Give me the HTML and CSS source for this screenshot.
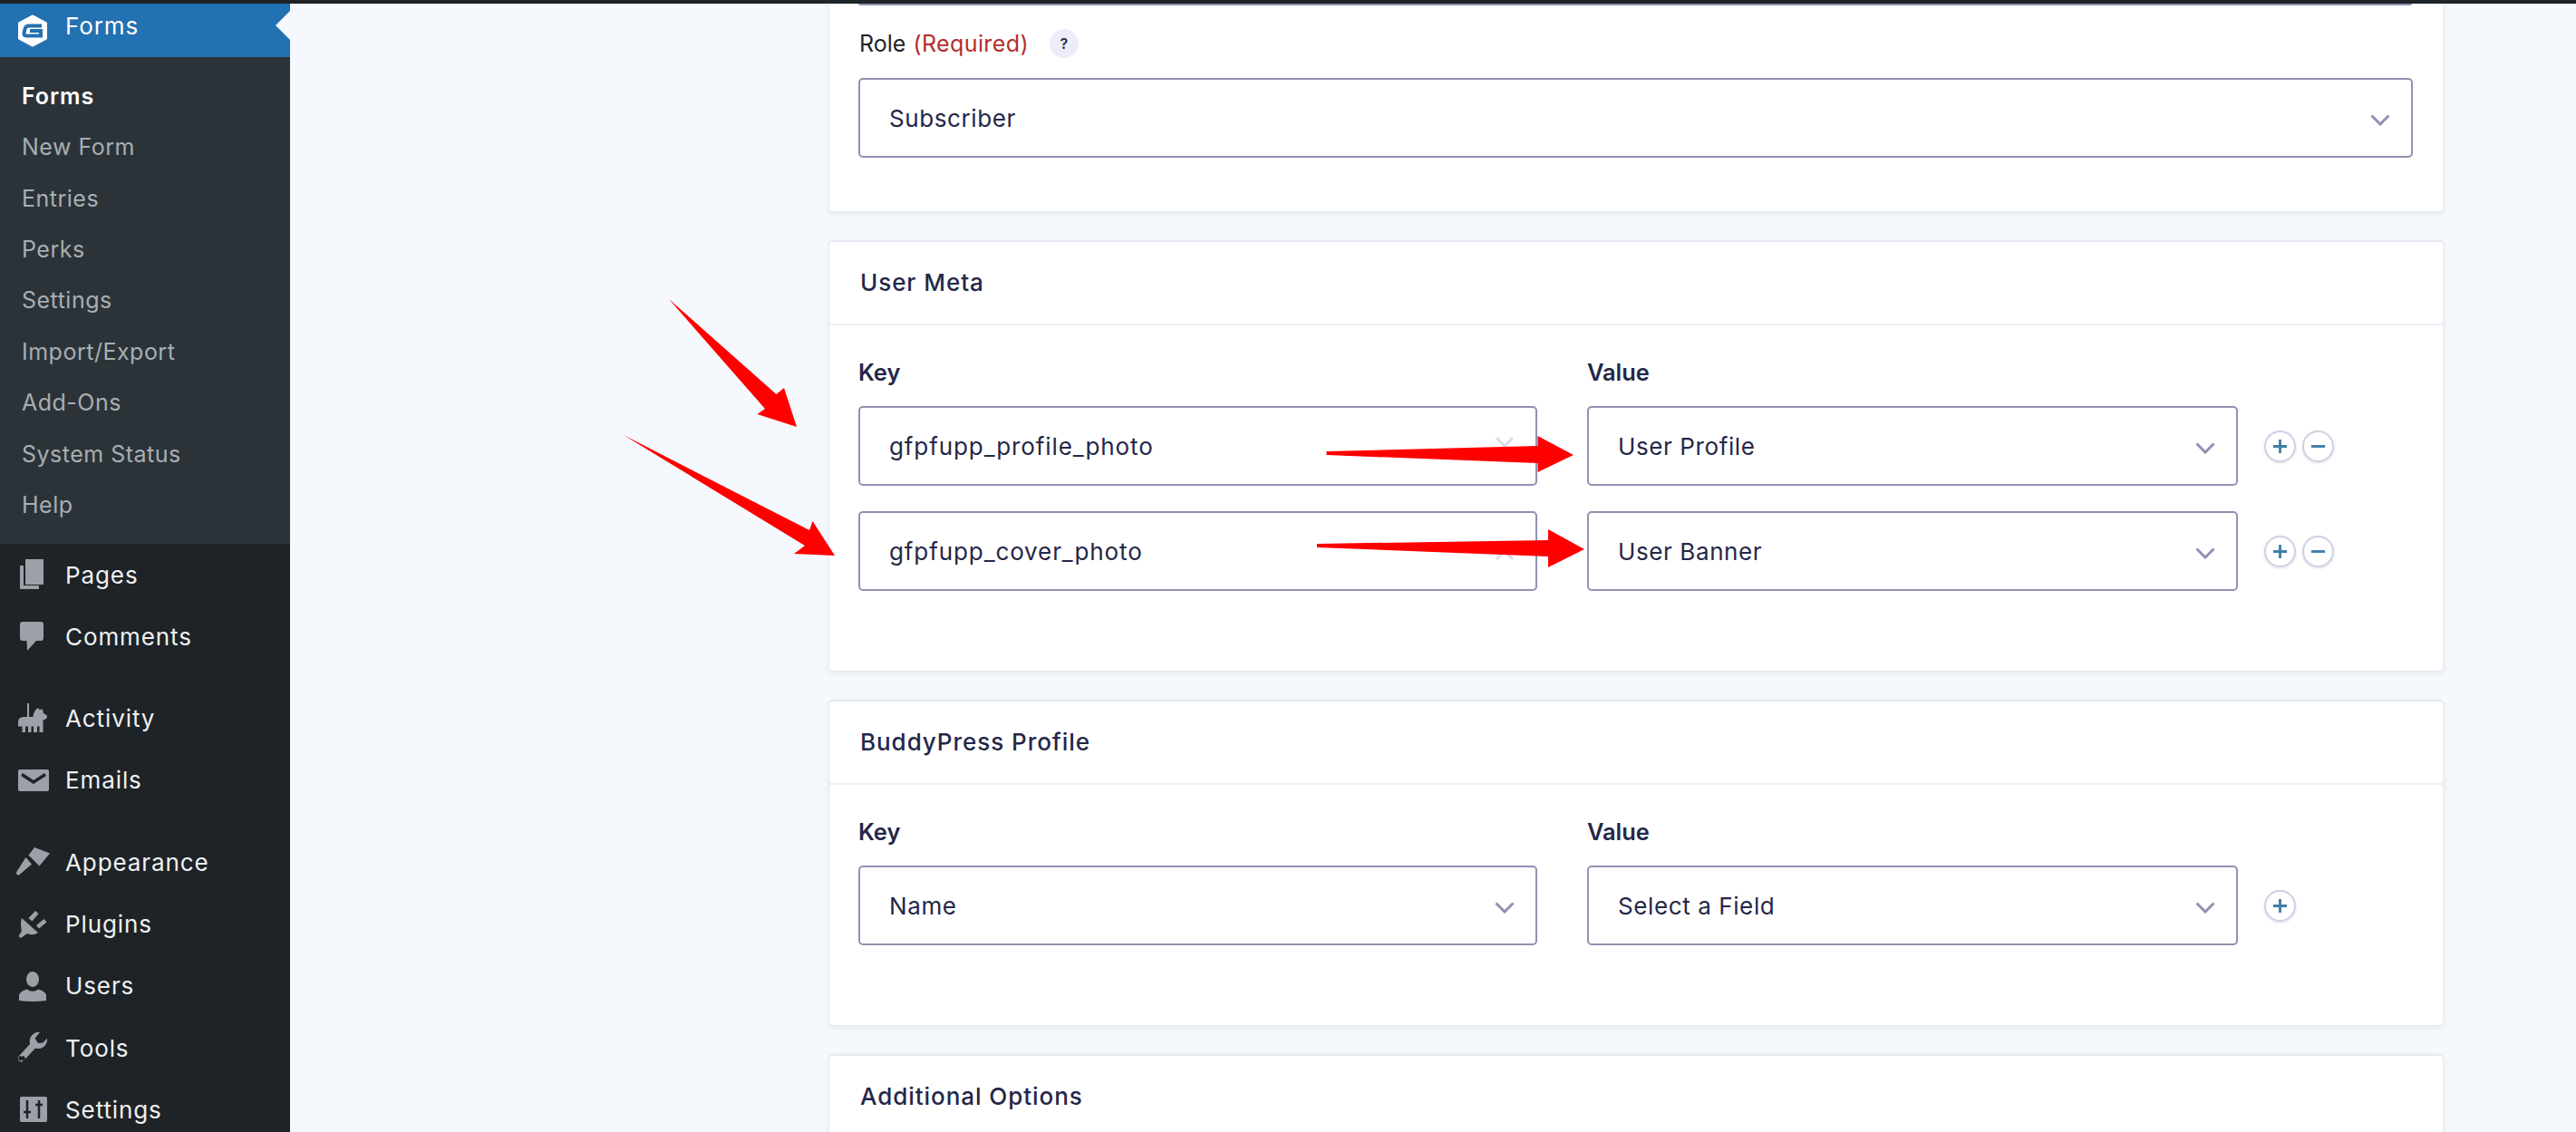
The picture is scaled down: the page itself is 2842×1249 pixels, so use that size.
FILE: index.html
```html
<!DOCTYPE html>
<html lang="en">
<head>
<meta charset="utf-8">
<title>Forms</title>
<link rel="stylesheet" href="styles.css">
</head>
<body>
<div class="topbar"></div>
<div class="layout">
  <nav class="sidebar">
    <div class="current">
      <svg class="logo" viewBox="0 0 32 36"><path class="logo-hex" d="M16 1.500 31 9.500V26.500L16 34.500 1 26.500V9.500Z"/><path class="logo-g" d="M26 12.500H12Q8.500 12.500 7.500 16L6.500 20.500Q6 23.500 9 23.500H25V18H13"/></svg>
      <span>Forms</span>
    </div>
    <ul class="submenu">
      <li class="active">Forms</li>
      <li>New Form</li>
      <li>Entries</li>
      <li>Perks</li>
      <li>Settings</li>
      <li>Import/Export</li>
      <li>Add-Ons</li>
      <li>System Status</li>
      <li>Help</li>
    </ul>
    <ul class="menu">
      <li><svg class="icon" viewBox="0 0 40 40"><path d="M12 3H32V31H12ZM6 10H10V32H27V36H6Z"/></svg>Pages</li>
      <li class="group-end"><svg class="icon" viewBox="0 0 40 40"><path d="M9 4H29Q32 4 32 7V22Q32 25 29 25H24L14 36 13.500 25H9Q6 25 6 22V7Q6 4 9 4Z"/></svg>Comments</li>
      <li><svg class="icon" viewBox="0 0 40 40"><path d="M14 3H16V18H20.500Q21 11 26 8L28 10.500 30 9Q32 11 32 14L36 16.500Q36 21 31.500 21.500V35H27.500V28.500H25V35H21V28.500H18.500V35H15V28.500H12V35H8.500V28.500H4V24Q4 18 10 18H14Z"/></svg>Activity</li>
      <li class="group-end"><svg class="icon" viewBox="0 0 40 40"><path d="M6 8H36Q38 8 38 10V30Q38 32 36 32H6Q4 32 4 30V10Q4 8 6 8Z"/><path class="cut" d="M8 13.500 21 22 34 13.500"/></svg>Emails</li>
      <li><svg class="icon" viewBox="0 0 40 40"><path d="M22 4 39 10.500 34 16.500 27.500 24.500 15.500 12.500ZM12.500 15 19 22.500 5 34.500Q2 35 2 31.500Z"/></svg>Appearance</li>
      <li><svg class="icon" viewBox="0 0 40 40"><path d="M8 13 26 29Q21 33 14 30L7 35 4.500 33 8 27Q6 20 8 13ZM15.500 13 23 5 26.500 8 19.500 16.500ZM24 21 32.500 14 35.500 17.500 27 24.500Z"/></svg>Plugins</li>
      <li><svg class="icon" viewBox="0 0 40 40"><ellipse cx="20" cy="12.500" rx="7" ry="8.500"/><path d="M5 36V31Q5 26 13.500 23.500Q20 28 26.500 23.500Q35 26 35 31V36Q20 38 5 36Z"/></svg>Users</li>
      <li><svg class="icon" viewBox="0 0 40 40"><path fill-rule="evenodd" d="M24 3 28 3 22.500 9.500 26 15 31.500 14.500 36 9.500Q36.500 16 31.500 19.500Q27 22 23 20.500L10 34.500Q6 37 4 33.500Q3 30.500 5.500 28.500L17 16Q16 10 19 6.500Q21 4 24 3ZM8 30.500A2 2.500 0 1 0 8 33A2 2.500 0 1 0 8 30.500Z"/></svg>Tools</li>
      <li><svg class="icon" viewBox="0 0 40 40"><path d="M8 6H34Q36 6 36 8V32Q36 34 34 34H8Q6 34 6 32V8Q6 6 8 6Z"/><path class="cut-thin" d="M14 10V30M10 23H18M27 10V30M23 15H31"/></svg>Settings</li>
    </ul>
  </nav>
  <main class="content">
    <section class="card card-role">
      <div class="sliver"></div>
      <div class="role-label">Role <span class="req">(Required)</span><span class="help">?</span></div>
      <div class="select">Subscriber<svg class="chev" viewBox="0 0 22 13"><path d="M1.500 1.500 11 11 20.500 1.500"/></svg></div>
    </section>
    <section class="card">
      <h2 class="card-title">User Meta</h2>
      <div class="map">
        <div class="label">Key</div>
        <div class="label">Value</div>
        <div></div>
        <div class="select key">gfpfupp_profile_photo<svg class="clear" viewBox="0 0 22 22"><path d="M2 2 20 20M20 2 2 20"/></svg></div>
        <div class="select">User Profile<svg class="chev" viewBox="0 0 22 13"><path d="M1.500 1.500 11 11 20.500 1.500"/></svg></div>
        <div class="actions"><span class="round"><svg viewBox="0 0 20 20"><path d="M10 2V18M2 10H18"/></svg></span><span class="round"><svg viewBox="0 0 20 20"><path d="M2 10H18"/></svg></span></div>
        <div class="select key">gfpfupp_cover_photo<svg class="clear" viewBox="0 0 22 22"><path d="M2 2 20 20M20 2 2 20"/></svg></div>
        <div class="select">User Banner<svg class="chev" viewBox="0 0 22 13"><path d="M1.500 1.500 11 11 20.500 1.500"/></svg></div>
        <div class="actions"><span class="round"><svg viewBox="0 0 20 20"><path d="M10 2V18M2 10H18"/></svg></span><span class="round"><svg viewBox="0 0 20 20"><path d="M2 10H18"/></svg></span></div>
      </div>
    </section>
    <section class="card">
      <h2 class="card-title">BuddyPress Profile</h2>
      <div class="map">
        <div class="label">Key</div>
        <div class="label">Value</div>
        <div></div>
        <div class="select">Name<svg class="chev" viewBox="0 0 22 13"><path d="M1.500 1.500 11 11 20.500 1.500"/></svg></div>
        <div class="select">Select a Field<svg class="chev" viewBox="0 0 22 13"><path d="M1.500 1.500 11 11 20.500 1.500"/></svg></div>
        <div class="actions"><span class="round"><svg viewBox="0 0 20 20"><path d="M10 2V18M2 10H18"/></svg></span></div>
      </div>
    </section>
    <section class="card card-last">
      <h2 class="card-title">Additional Options</h2>
    </section>
  </main>
</div>
<svg class="annotations" viewBox="0 0 2842 1249">
  <polygon points="738,330 856.500,435 865,428 879,471 835.500,457 844,451"/>
  <polygon points="688,480 893,585 896.500,575 921,613 876,611 888,602"/>
  <polygon points="1463.500,498 1696.500,492 1696.500,481 1736,502 1696.500,521 1696.500,511 1463.500,502"/>
  <polygon points="1453,600 1708,596 1708,584 1748,606 1708,626 1708,614 1453,604"/>
</svg>
</body>
</html>
```
FILE: styles.css
```css
* { box-sizing: border-box; }
html, body { margin: 0; padding: 0; height: 100%; overflow: hidden; }
body { background: #f5f8fc; font-family: Inter, "Noto Sans", sans-serif; color: #242748; position: relative; }
.topbar { height: 4px; background: #1d2327; }
.layout { display: flex; height: 1245px; overflow: hidden; }

.sidebar { width: 320px; flex: none; background: #1d2327; font-size: 26px; letter-spacing: 0.9px; }
.current { height: 59px; background: #2271b1; color: #fff; display: flex; align-items: center; position: relative; padding-left: 20px; padding-bottom: 11px; gap: 20px; }
.current::after { content: ""; position: absolute; right: 0; top: 8px; border: 16px solid transparent; border-left-width: 0; border-right-color: #f5f8fc; }
.logo { width: 32px; height: 36px; margin-top: 11px; flex: none; }
.logo-hex { fill: #fff; stroke: #fff; stroke-width: 2; stroke-linejoin: round; }
.logo-g { fill: none; stroke: #2271b1; stroke-width: 4; }
.submenu, .menu { list-style: none; margin: 0; padding: 0; }
.submenu { background: #2c3338; padding: 14.800px 0 14.600px 24px; color: #a7aeb3; font-size: 25px; letter-spacing: 0.5px; }
.submenu li { height: 56.400px; line-height: 56.400px; }
.submenu .active { color: #fff; font-weight: 600; letter-spacing: 0.9px; }
.menu { color: #f0f0f1; }
.menu li { height: 68.300px; display: flex; align-items: center; padding-left: 16px; gap: 16px; }
.menu .group-end { margin-bottom: 22px; }
.icon { width: 40px; height: 40px; flex: none; fill: #9ca1a7; }
.cut { fill: none; stroke: #1d2327; stroke-width: 3.500; }
.cut-thin { fill: none; stroke: #1d2327; stroke-width: 2.500; }

.content { margin-left: 594px; width: 1782px; display: flex; flex-direction: column; gap: 31px; flex: none; }
.card { background: #fff; border: 1px solid #e6e8f2; border-top-width: 2px; border-radius: 5px; box-shadow: 0 2px 6px rgba(36, 39, 72, 0.07); flex: none; }
.card-role { height: 230px; border-top: 0; border-radius: 0 0 5px 5px; padding: 0 33px 0 32px; }
.sliver { height: 2px; background: #9092b2; margin-right: 1px; border-radius: 0 0 4px 4px; }
.role-label { height: 32px; margin-top: 26px; margin-bottom: 22px; margin-left: 1px; display: flex; align-items: center; font-size: 25px; color: #1d2327; white-space: pre; }
.req { color: #b32d2e; margin-left: 1px; letter-spacing: 0.4px; }
.help { width: 32px; height: 32px; border-radius: 50%; background: #ecedf8; color: #242748; font-size: 16px; font-weight: 600; display: flex; align-items: center; justify-content: center; margin-left: 23px; }
.select { height: 88px; border: 2px solid #9092b2; border-radius: 5px; background: #fff; display: flex; align-items: center; justify-content: space-between; padding: 0 23px 0 32px; font-size: 26px; letter-spacing: 0.6px; color: #242748; }
.key { letter-spacing: 0.9px; }
.chev { width: 22px; height: 13px; fill: none; stroke: #9092b2; stroke-width: 3; margin-top: 4px; flex: none; }
.clear { width: 22px; height: 22px; fill: none; stroke: #d8dbea; stroke-width: 3; flex: none; }
.card-title { margin: 0; height: 92px; border-bottom: 2px solid #eceef5; padding: 0 33px 0 34px; font-size: 26px; letter-spacing: 0.95px; font-weight: 500; line-height: 89px; color: #242748; }
.map { display: grid; grid-template-columns: 749px 718px auto; column-gap: 55px; padding: 34px 33px 88px 32px; row-gap: 28px; align-items: center; }
.label { font-size: 25.400px; font-weight: 600; line-height: 36px; margin-bottom: -9px; }
.actions { display: flex; gap: 7px; margin-left: -26.500px; }
.round { width: 35px; height: 35px; border-radius: 50%; border: 2px solid #cfd1e6; background: #fff; box-shadow: 0 1px 3px rgba(36, 39, 72, 0.15); display: flex; align-items: center; justify-content: center; }
.round svg { width: 19px; height: 19px; fill: none; stroke: #3e7da6; stroke-width: 3; }
.card-last { height: 200px; }

.annotations { position: absolute; left: 0; top: 0; width: 2842px; height: 1249px; fill: #fe0000; pointer-events: none; }
```
